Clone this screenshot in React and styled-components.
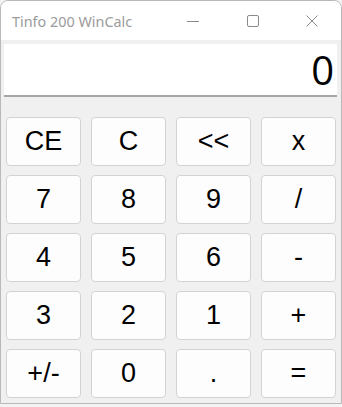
import React from "react";
import styled, { createGlobalStyle } from "styled-components";

const Global = createGlobalStyle`
  html, body { margin: 0; padding: 0; background: #f3f3f3; }
  * { box-sizing: border-box; }
`;

const Window = styled.div`
  width: 342px;
  height: 404px;
  border: 1px solid #b9b9b9;
  border-radius: 8px 8px 0 0;
  overflow: hidden;
  background: #f0f0f0;
  display: flex;
  flex-direction: column;
`;

const TitleBar = styled.div`
  height: 39px;
  background: #ffffff;
  display: flex;
  align-items: center;
  padding-left: 11px;
  flex-shrink: 0;
`;

const Title = styled.div`
  flex: 1;
  font-family: "Noto Sans", "Open Sans", sans-serif;
  font-size: 14.4px;
  color: #9b9b9b;
  padding-top: 1px;
`;

const Controls = styled.div`
  display: flex;
  height: 100%;
`;

const CtlBtn = styled.div`
  width: ${(p) => (p.$last ? 58 : 60)}px;
  height: 100%;
  display: flex;
  align-items: center;
  justify-content: center;
`;

const Body = styled.div`
  flex: 1;
  padding: 4px 4px 0 3px;
  display: flex;
  flex-direction: column;
`;

const Display = styled.div`
  height: 53px;
  background: #ffffff;
  border-bottom: 2px solid #a6a6a6;
  display: flex;
  align-items: center;
  justify-content: flex-end;
  padding-right: 3px;
  font-family: "Open Sans", "Noto Sans", sans-serif;
  font-size: 40px;
  color: #000;
  line-height: 1;
`;

const Grid = styled.div`
  margin-top: 20px;
  padding-left: 2px;
  display: grid;
  grid-template-columns: repeat(4, 75px);
  grid-auto-rows: 49px;
  column-gap: 10px;
  row-gap: 9px;
`;

const Key = styled.button`
  background: #fdfdfd;
  border: 1px solid #d3d3d3;
  border-radius: 4px;
  font-family: "Liberation Sans", Arial, sans-serif;
  font-size: 27px;
  color: #000;
  padding: 0;
  display: flex;
  align-items: center;
  justify-content: center;
`;

const keys = ["CE", "C", "<<", "x", "7", "8", "9", "/", "4", "5", "6", "-", "3", "2", "1", "+", "+/-", "0", ".", "="];

export default function App() {
  return (
    <>
      <Global />
      <Window>
        <TitleBar>
          <Title>Tinfo 200 WinCalc</Title>
          <Controls>
            <CtlBtn>
              <svg width="12" height="12" viewBox="0 0 12 12">
                <line x1="0" y1="6.5" x2="12" y2="6.5" stroke="#8a8a8a" strokeWidth="1" />
              </svg>
            </CtlBtn>
            <CtlBtn>
              <svg width="12" height="12" viewBox="0 0 12 12">
                <rect x="0.5" y="0.5" width="11" height="11" rx="1.5" fill="none" stroke="#8a8a8a" strokeWidth="1" />
              </svg>
            </CtlBtn>
            <CtlBtn $last>
              <svg width="12" height="12" viewBox="0 0 12 12">
                <path d="M0.5 0.5 L11.5 11.5 M11.5 0.5 L0.5 11.5" stroke="#8a8a8a" strokeWidth="1" />
              </svg>
            </CtlBtn>
          </Controls>
        </TitleBar>
        <Body>
          <Display>0</Display>
          <Grid>
            {keys.map((k) => (
              <Key key={k}>{k}</Key>
            ))}
          </Grid>
        </Body>
      </Window>
    </>
  );
}
